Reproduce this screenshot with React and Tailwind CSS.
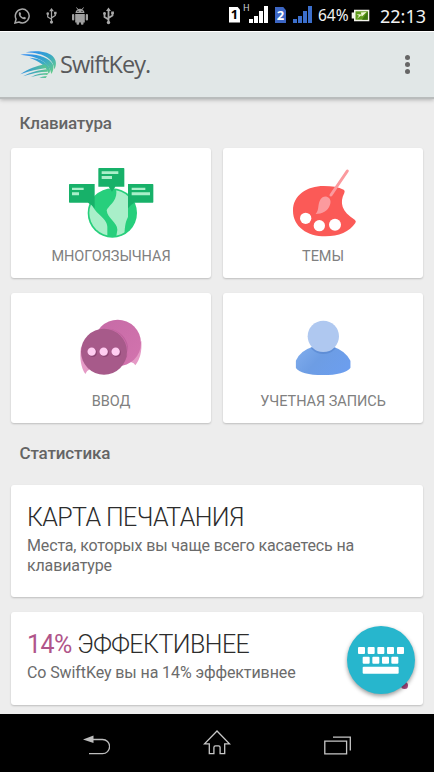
import React from 'react';

const WhatsappIcon = () => (
  <svg className="w-4 h-4" viewBox="0 0 16 16" fill="none" stroke="#a8a8a8" strokeWidth="1.5">
    <path d="M1 15l1.1-3.9A6.9 6.9 0 1 1 4.9 14z" />
    <path d="M5 4.6l1.1-.6 1.1 2-.7 1c.6 1.2 1.4 2 2.6 2.500l.9-.8 2 1-.5 1.300C8.600 12.600 3.600 8 5 4.600z" fill="#a8a8a8" stroke="none" />
  </svg>
);

const UsbIcon = ({ className, bold }) => (
  <svg className={className} viewBox="0 0 11 17" fill="none" stroke="#a8a8a8" strokeWidth={bold ? 1.8 : 1.3}>
    <path d="M5.500 2v12M5.500 12L1.500 9.500V6M5.500 10.500l4-2.500V5" />
    <path d="M5.500 0L8 3.500H3z" fill="#a8a8a8" stroke="none" />
    <circle cx="1.500" cy="6" r="1.400" fill="#a8a8a8" stroke="none" />
    <path d="M8.200 4h2.700v2.700H8.200z" fill="#a8a8a8" stroke="none" />
    <circle cx="5.500" cy="15" r="1.700" fill="#a8a8a8" stroke="none" />
  </svg>
);

const AndroidIcon = () => (
  <svg className="w-[18px] h-[18px]" viewBox="0 0 18 18" fill="#a0a0a0">
    <path d="M4.500 6a4.500 4.300 0 0 1 9 0z" />
    <path d="M5.500.5l1.500 2M12.500.5L11 2.500" stroke="#a0a0a0" strokeWidth="1" />
    <circle cx="7" cy="4.300" r=".6" fill="#000" />
    <circle cx="11" cy="4.300" r=".6" fill="#000" />
    <path d="M4.200 7h9.600v8.500H4.200z" />
    <rect x="1" y="7" width="2.300" height="6.500" rx="1.100" />
    <rect x="14.700" y="7" width="2.300" height="6.500" rx="1.100" />
    <rect x="5.500" y="14" width="2.600" height="3.800" rx="1" />
    <rect x="9.900" y="14" width="2.600" height="3.800" rx="1" />
  </svg>
);

const Sim = ({ number, className }) => (
  <div className={`flex items-center justify-center h-4 w-[11px] text-[13px] leading-none font-bold [clip-path:polygon(0_0,75%_0,100%_20%,100%_100%,0_100%)] ${className}`}>
    {number}
  </div>
);

const Signal = ({ className }) => (
  <svg className={className} viewBox="0 0 19 17" fill="currentColor">
    <path d="M0 13h4v4H0zM5 10h4v7H5zM10 5h4v12h-4zM15 0h4v17h-4z" />
  </svg>
);

const Battery = () => (
  <svg className="w-[19px] h-[13px]" viewBox="0 0 19 13">
    <path d="M3 .7h15.300v11.600H3V9.500H.7v-6H3z" fill="#f4f4ec" />
    <rect x="4.500" y="2.300" width="12.300" height="8.400" fill="#5f9a1c" />
    <path d="M16.800 2.300v8.400H11z" fill="#3c7510" />
    <path d="M5.500 5.200l5 .2-.8-1.900 5.800-.6-4.600 4.500-.6-1.200-4.300 3.500 2-3z" fill="#f2f6d8" />
  </svg>
);

const Swoosh = () => (
  <svg className="w-9 h-[27px]" viewBox="60 151 108 81">
    <defs>
      <linearGradient id="swoosh" gradientUnits="userSpaceOnUse" x1="90" y1="150" x2="150" y2="220">
        <stop offset="0" stopColor="#2d8cf0" />
        <stop offset=".5" stopColor="#35a4cc" />
        <stop offset="1" stopColor="#62cb8c" />
      </linearGradient>
      <linearGradient id="swooshLow" gradientUnits="userSpaceOnUse" x1="60" y1="0" x2="145" y2="0">
        <stop offset="0" stopColor="#2e90e6" />
        <stop offset="1" stopColor="#5cc98a" />
      </linearGradient>
    </defs>
    <g fill="url(#swoosh)">
      <path d="M77 155C114 148 148 153 162 171C170 182 169 195 163 206C160 178 138 157 77 155z" />
      <path d="M61 162C108 156 149 170 159 192C162 203 159 212 154 220C150 190 122 167 61 162z" />
      <path d="M88 171C124 173 148 190 150 208C150 213 149 216 146 219C138 196 120 182 88 171z" />
    </g>
    <g fill="url(#swooshLow)">
      <path d="M61 221C86 203 110 197 133 191C138 195 140 198 141 202C114 205 88 211 61 221z" />
      <path d="M69 227C94 213 121 208 142 206L143 213C118 213 94 218 69 227z" />
      <path d="M93 229C110 219 128 217 144 217L142 223C126 220 111 224 93 229z" />
      <path d="M118 231Q129 225 141 227L137 232z" />
    </g>
  </svg>
);

const GlobeArt = () => (
  <svg className="w-[90px] h-[76px]" viewBox="198 192 270 228">
    <clipPath id="globe">
      <circle cx="337" cy="339" r="69" />
    </clipPath>
    <circle cx="337" cy="339" r="74" fill="#27cf7c" />
    <g clipPath="url(#globe)" fill="#a9efc9">
      <path d="M255 300L275 312C285 342 321 354 322 380V415H255z" />
      <path d="M347 265C358 300 324 318 320 331C322 356 353 368 352 390L348 415H373C374 390 374 370 384 351V270z" />
    </g>
    <g fill="#17b169">
      <path d="M209 252H284V325Q277 315 264 308H209Q207 308 207 306V254Q207 252 209 252z" />
      <path d="M297 204H371Q373 204 373 206V260H346L336 275L326 260H295V206Q295 204 297 204z" />
      <path d="M384 252H458Q460 252 460 254V306Q460 308 458 308H403Q390 315 384 325z" />
    </g>
    <path d="M305 214h50v8h-50zM305 228h31v9h-31zM216 263h35v7h-35zM216 277h21v9h-21zM395 263h41v7h-41zM395 277h55v9h-55z" fill="#a9efc9" />
  </svg>
);

const PaletteArt = () => (
  <svg className="w-[90px] h-[76px]" viewBox="183 72 270 228">
    <path d="M228 212C228 165 270 138 320 138C345 138 365 141 380 149Q385 152 382 159C367 188 374 215 413 239Q419 243 415 249C398 275 365 289 325 289C271 289 228 260 228 212z" fill="#fb5a57" />
    <circle cx="266" cy="235" r="17" fill="#fff" />
    <circle cx="307" cy="257" r="17" fill="#fff" />
    <circle cx="354" cy="254" r="18" fill="#fff" />
    <path d="M391 93L342 165" stroke="#fb9a9e" strokeWidth="9" strokeLinecap="round" />
    <path d="M329 170C340 173 343 184 339 194C333 214 315 221 296 222C306 211 302 198 308 183C312 173 320 169 329 170z" fill="#fb9a9e" />
  </svg>
);

const ChatArt = () => (
  <svg className="w-[90px] h-[76px]" viewBox="198 72 270 228">
    <defs>
      <linearGradient id="bubbleBack" x1="0" y1="0" x2="1" y2="1">
        <stop offset="0" stopColor="#c56aa6" />
        <stop offset="1" stopColor="#d374ae" />
      </linearGradient>
    </defs>
    <path d="M424 168C426 200 420 223 406 241Q402 234 394 232L370 222z" fill="#e59ac6" />
    <circle cx="353" cy="174" r="70" fill="url(#bubbleBack)" />
    <path d="M328 131A70 70 0 0 1 381 215Q371 238 350 243C377 226 386 205 384 186C381 157 358 136 328 131z" fill="#bd609c" />
    <path d="M243 185C238 220 243 247 256 267Q260 256 270 253L285 240z" fill="#e59ac6" />
    <circle cx="312" cy="200" r="69" fill="#a75a8a" />
    <g fill="#8f4675">
      <circle cx="278" cy="203" r="13" />
      <circle cx="314" cy="203" r="13" />
      <circle cx="350" cy="203" r="13" />
    </g>
    <g fill="#ffcdf1">
      <circle cx="275" cy="200" r="12.500" />
      <circle cx="311" cy="200" r="12.500" />
      <circle cx="347" cy="200" r="12.500" />
    </g>
  </svg>
);

const AccountArt = () => (
  <svg className="w-[90px] h-[76px]" viewBox="183 72 270 228">
    <defs>
      <linearGradient id="body" x1="0" y1="0" x2="1" y2=".5">
        <stop offset="0" stopColor="#84b0ee" />
        <stop offset=".5" stopColor="#6d9de4" />
        <stop offset="1" stopColor="#6c9eee" />
      </linearGradient>
      <clipPath id="bodyClip">
        <path d="M236 228Q249 197 286 186H350Q385 197 401 228V248Q382 270 318 270Q252 270 236 248z" />
      </clipPath>
    </defs>
    <g clipPath="url(#bodyClip)">
      <path d="M230 180h180v100H230z" fill="url(#body)" />
      <ellipse cx="319" cy="163" rx="46" ry="44" fill="#5583cd" opacity=".6" />
    </g>
    <circle cx="319" cy="154" r="47" fill="#afc8f0" />
  </svg>
);

const tiles = [
  { label: 'МНОГОЯЗЫЧНАЯ', Art: GlobeArt },
  { label: 'ТЕМЫ', Art: PaletteArt },
  { label: 'ВВОД', Art: ChatArt },
  { label: 'УЧЕТНАЯ ЗАПИСЬ', Art: AccountArt },
];

const App = () => {
  return (
    <div className="w-[434px] h-[772px] bg-[#ededed] flex flex-col overflow-hidden font-['Roboto',sans-serif]">
      {/* Status bar */}
      <div className="h-[31px] shrink-0 bg-black flex items-center justify-between pl-3.5 pr-2 font-['Noto_Sans',sans-serif] text-[#f2f2f2]">
        <div className="flex items-center">
          <WhatsappIcon />
          <UsbIcon className="w-[11px] h-4 ml-4" />
          <span className="ml-3.5"><AndroidIcon /></span>
          <UsbIcon className="w-[11px] h-[18px] ml-3.5" bold />
        </div>
        <div className="flex items-center">
          <Sim number="1" className="bg-white text-black mb-[2px]" />
          <span className="text-[9px] leading-none mb-4 ml-[3px] w-[6px] text-gray-300">H</span>
          <Signal className="w-[19px] h-[17px] text-white mb-[2px]" />
          <Sim number="2" className="bg-[#3c66c4] text-white ml-[7px] mb-px" />
          <Signal className="w-[19px] h-[17px] text-[#3c6fcc] ml-[7px] mb-[2px]" />
          <span className="text-[15.500px] leading-none ml-[6px] w-[31px]">64%</span>
          <span className="ml-[2px]"><Battery /></span>
          <span className="text-[18px] leading-none ml-[10px]">22:13</span>
        </div>
      </div>

      {/* App bar */}
      <div className="h-[68px] shrink-0 bg-[#e1e7e7] border-t border-t-white border-b-2 border-b-[#b9bcbc] shadow-[0_1px_4px_rgba(0,0,0,0.25)] flex items-center justify-between pl-5 pr-6">
        <div className="flex items-center">
          <Swoosh />
          <span className="ml-1 text-[23.500px] leading-none tracking-[-0.950px] text-[#58595b] font-['Open_Sans',sans-serif]">SwiftKey.</span>
        </div>
        <div className="flex flex-col gap-[2px]">
          <span className="w-[5px] h-[5px] rounded-full bg-[#666]"></span>
          <span className="w-[5px] h-[5px] rounded-full bg-[#666]"></span>
          <span className="w-[5px] h-[5px] rounded-full bg-[#666]"></span>
        </div>
      </div>

      <div className="h-[615px] shrink-0 px-[11px] overflow-hidden">
        <h2 className="h-[49px] pl-[8.500px] pt-[14px] text-[17px] leading-5 tracking-[-0.150px] font-medium text-[#646464]">Клавиатура</h2>
        <div className="grid grid-cols-2 gap-x-3 gap-y-[15px]">
          {tiles.map(({ label, Art }) => (
            <div key={label} className="h-[130px] pt-4 bg-white rounded-[3px] shadow-[0_1px_2px_rgba(0,0,0,0.2)] flex flex-col items-center">
              <Art />
              <span className="mt-[7px] text-[14.500px] leading-5 tracking-[-0.050px] text-[#808080]">{label}</span>
            </div>
          ))}
        </div>

        <h2 className="h-[62px] pl-[8.500px] pt-5 text-[17px] leading-5 tracking-[-0.150px] font-medium text-[#646464]">Статистика</h2>
        <div className="h-[112px] px-4 pt-[18px] w-[412px] bg-white rounded-[3px] shadow-[0_1px_2px_rgba(0,0,0,0.2)]">
          <h3 className="text-[25px] leading-[30px] tracking-[-0.620px] font-light text-[#2c2c2c] whitespace-nowrap">КАРТА ПЕЧАТАНИЯ</h3>
          <p className="mt-[3px] text-[16px] leading-[19.500px] tracking-[-0.150px] text-[#6b6b6b]">
            Места, которых вы чаще всего касаетесь на<br />клавиатуре
          </p>
        </div>

        <div className="relative mt-[15px] h-[93px] px-4 pt-[18px] w-[412px] bg-white rounded-[3px] shadow-[0_1px_2px_rgba(0,0,0,0.2)]">
          <h3 className="text-[25px] leading-[30px] tracking-[-0.550px] font-light text-[#2c2c2c] whitespace-nowrap">
            <span className="font-normal text-[#b0558a]">14%</span> ЭФФЕКТИВНЕЕ
          </h3>
          <p className="mt-[3px] text-[16px] leading-[19.500px] tracking-[-0.100px] text-[#6b6b6b]">Со SwiftKey вы на 14% эффективнее</p>
          <span className="absolute left-[390px] top-[70px] w-[7px] h-[7px] rounded-full bg-[#a8487f]"></span>
          {/* Keyboard button */}
          <button className="absolute left-[336px] top-[14px] w-[68px] h-[68px] rounded-full bg-[#27b6cd] shadow-[0_2px_4px_rgba(0,0,0,0.4)] flex items-center justify-center">
            <svg className="w-[46px] h-[27px]" viewBox="0 0 138 81" fill="#fff">
              {[0, 29, 58, 87, 117].map((x) => (
                <rect key={x} x={x} y="0" width="21" height="21" rx="3" />
              ))}
              {[14, 43, 72, 100].map((x) => (
                <rect key={x} x={x} y="29" width="21" height="21" rx="3" />
              ))}
              <rect x="14" y="59" width="108" height="21" rx="3" />
            </svg>
          </button>
        </div>
      </div>

      {/* Navigation bar */}
      <div className="flex-1 bg-black flex items-start pl-[83px] pt-4">
        <svg className="w-[27px] h-[27px] mt-px" viewBox="0 0 27 27" fill="none" stroke="#bdbdbd" strokeWidth="1.300">
          <path d="M9 8.500h10.500a6.700 6.700 0 0 1 0 14.200H6" />
          <path d="M0 8.500L10.500 4.500v7.500z" fill="#bdbdbd" stroke="none" />
        </svg>
        <svg className="w-7 h-[27px] ml-[93px]" viewBox="0 0 28 27" fill="none" stroke="#c8c8c8" strokeWidth="1.300">
          <path d="M14 1L1.500 13.800h4.800v9.900h4.600v-6.300q0-1.600 1.600-1.600h3q1.600 0 1.600 1.600v6.300h4.600v-9.900h4.800z" />
        </svg>
        <svg className="w-7 h-[27px] ml-[93px]" viewBox="0 0 28 27" fill="none" stroke="#c8c8c8" strokeWidth="1.300">
          <path d="M.8 11.200h21.800v12.600H.8zM9 7.200h17.300v13.300" />
        </svg>
      </div>
    </div>
  );
};

export default App;
